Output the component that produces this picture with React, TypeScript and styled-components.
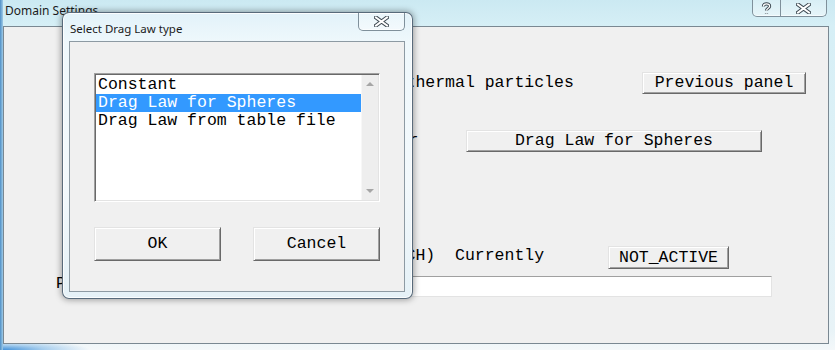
import React from "react";
import styled, { createGlobalStyle } from "styled-components";

const mono = `"Liberation Mono", "Courier New", monospace`;
const ui = `"Noto Sans", "Open Sans", sans-serif`;

const GlobalStyle = createGlobalStyle`
  html, body {
    margin: 0;
    padding: 0;
    width: 835px;
    height: 350px;
    overflow: hidden;
  }
  body {
    font-family: ${mono};
  }
`;

const Frame = styled.div`
  position: relative;
  width: 835px;
  height: 350px;
  box-sizing: border-box;
  display: flex;
  flex-direction: column;
  padding: 0 6px 6px 3px;
  background:
    linear-gradient(90deg, #4f8fc6 0, #9fcbe8 3px, transparent 3px),
    radial-gradient(ellipse 90px 10px at 0 100%, #3f8fd8 0, rgba(120, 180, 230, 0.6) 50%, transparent 100%),
    linear-gradient(180deg, #cbe9f2 0, #d6eff6 26px, #e8f3f7 330px, #f4f8fa 100%);
`;

const TitleBar = styled.div`
  height: 26px;
  display: flex;
  justify-content: space-between;
  align-items: flex-start;
`;

const WindowTitle = styled.div`
  padding: 3px 0 0 2px;
  font: 12px/16px ${ui};
  color: #1b1b1b;
`;

const Caption = styled.div`
  display: flex;
  margin-right: 2px;
`;

const CaptionButton = styled.div<{ $w: number; $h?: number; $round: string; $noLeft?: boolean }>`
  width: ${(p) => p.$w}px;
  height: ${(p) => p.$h ?? 17}px;
  box-sizing: border-box;
  display: flex;
  align-items: center;
  justify-content: center;
  border: 1px solid #7f909b;
  border-top: none;
  border-left-width: ${(p) => (p.$noLeft ? 0 : 1)}px;
  border-radius: ${(p) => p.$round};
  background: linear-gradient(180deg, rgba(255, 255, 255, 0.25), rgba(255, 255, 255, 0.45));
  box-shadow: inset 0 -1px 0 rgba(255, 255, 255, 0.6);
`;

const Client = styled.div`
  flex: 1;
  border: 1px solid #7a8892;
  background: #f0f0f0;
  display: flex;
  flex-direction: column;
`;

const Row = styled.div<{ $top: number }>`
  display: flex;
  align-items: flex-start;
  margin-top: ${(p) => p.$top}px;
`;

const Label = styled.div<{ $x: number; $w: number; $dy?: number }>`
  width: ${(p) => p.$w}px;
  flex: none;
  margin-left: ${(p) => p.$x}px;
  margin-top: ${(p) => p.$dy ?? 0}px;
  font: 16.5px/20px ${mono};
  color: #000;
  white-space: pre;
  overflow: hidden;
`;

const WinButton = styled.button<{ $w: number; $h: number }>`
  width: ${(p) => p.$w}px;
  height: ${(p) => p.$h}px;
  flex: none;
  box-sizing: border-box;
  margin: 0;
  padding: 0;
  font: 16.5px/${(p) => p.$h - 2}px ${mono};
  color: #000;
  text-align: center;
  white-space: pre;
  background: #f0f0f0;
  border: 1px solid;
  border-color: #e3e3e3 #696969 #696969 #e3e3e3;
  box-shadow: inset 1px 1px #fff, inset -1px -1px #a0a0a0;
`;

const TextField = styled.div<{ $w: number }>`
  width: ${(p) => p.$w}px;
  height: 21px;
  box-sizing: border-box;
  background: #fff;
  border: 1px solid;
  border-color: #a0a0a0 #e3e3e3 #e3e3e3 #a0a0a0;
`;

/* modal dialog lies over the main panel */
const Dialog = styled.div`
  position: absolute;
  left: 62px;
  top: 12px;
  width: 351px;
  height: 287px;
  box-sizing: border-box;
  display: flex;
  flex-direction: column;
  padding: 0 7px 6px 6px;
  border: 1px solid rgba(40, 60, 80, 0.75);
  border-radius: 7px;
  background: linear-gradient(180deg, #e2f2f9 0, #eff8fc 30px, #f3f9fc 60%, #e5f1f7 100%);
  box-shadow: 0 0 6px 1px rgba(0, 0, 0, 0.35), inset 0 0 0 1px rgba(255, 255, 255, 0.85);
`;

const DialogTitleBar = styled.div`
  height: 28px;
  flex: none;
  display: flex;
  justify-content: space-between;
  align-items: flex-start;
`;

const DialogTitle = styled.div`
  padding: 8px 0 0 1px;
  font: 11.5px/15px ${ui};
  color: #1b1b1b;
`;

const DialogClient = styled.div`
  flex: 1;
  border: 1px solid #8d9aa3;
  background: #f0f0f0;
  display: flex;
  flex-direction: column;
  padding-left: 24px;
`;

const ListBox = styled.div`
  width: 286px;
  height: 129px;
  box-sizing: border-box;
  margin-top: 31px;
  display: flex;
  background: #fff;
  border: 1px solid;
  border-color: #a0a0a0 #fff #fff #a0a0a0;
  box-shadow: inset 1px 1px #696969, inset -1px -1px #e3e3e3;
  padding: 1px;
`;

const Items = styled.div`
  flex: 1;
  display: flex;
  flex-direction: column;
  padding-top: 1px;
`;

const Item = styled.div<{ $selected?: boolean }>`
  height: 18px;
  padding-left: 2px;
  font: 16.5px/18px ${mono};
  white-space: pre;
  color: ${(p) => (p.$selected ? "#fff" : "#000")};
  background: ${(p) => (p.$selected ? "#3399ff" : "transparent")};
`;

const ScrollBar = styled.div`
  width: 16px;
  flex: none;
  background: #eeeeee;
  border-left: 1px solid #f7f7f7;
  display: flex;
  flex-direction: column;
  justify-content: space-between;
  align-items: center;
  padding: 7px 0 7px;
`;

const Arrow = styled.div<{ $down?: boolean }>`
  width: 0;
  height: 0;
  border-left: 4px solid transparent;
  border-right: 4px solid transparent;
  ${(p) => (p.$down ? "border-top: 4px solid #a6a6a6;" : "border-bottom: 4px solid #a6a6a6;")}
`;

const DialogButtons = styled.div`
  display: flex;
  gap: 32px;
  margin-top: 25px;
`;

const CloseGlyph = () => (
  <svg width="15" height="11" viewBox="0 0 15 11">
    <path d="M2 1.5 L13 9.5 M2 9.5 L13 1.5" stroke="#3b4750" strokeWidth="4" strokeLinecap="square" />
    <path d="M2 1.5 L13 9.5 M2 9.5 L13 1.5" stroke="#fff" strokeWidth="2" strokeLinecap="square" />
  </svg>
);

const helpPath = "M2.4 4.4 C2.4 1 8.6 1 8.6 4.2 C8.6 6.2 5.5 6.4 5.5 8.6 M5.5 10.9 L5.5 11.4";

const HelpGlyph = () => (
  <svg width="11" height="13" viewBox="0 0 11 13">
    <path d={helpPath} fill="none" stroke="#3b4750" strokeWidth="3.2" />
    <path d={helpPath} fill="none" stroke="#fff" strokeWidth="1.3" />
  </svg>
);

export default function App() {
  return (
    <>
      <GlobalStyle />
      <Frame>
        <TitleBar>
          <WindowTitle>Domain Settings</WindowTitle>
          <Caption>
            <CaptionButton $w={29} $round="0 0 0 5px">
              <HelpGlyph />
            </CaptionButton>
            <CaptionButton $w={46} $round="0 0 5px 0" $noLeft>
              <CloseGlyph />
            </CaptionButton>
          </Caption>
        </TitleBar>
        <Client>
          <Row $top={45}>
            <Label $x={401.5} $w={236.5} $dy={1}>thermal particles</Label>
            <WinButton $w={164} $h={22}>Previous panel</WinButton>
          </Row>
          <Row $top={36}>
            <Label $x={404.5} $w={57.5} $dy={1}>r</Label>
            <WinButton $w={296} $h={22}>Drag Law for Spheres</WinButton>
          </Row>
          <Row $top={94}>
            <Label $x={401.5} $w={202.5} $dy={0}>{"CH)  Currently"}</Label>
            <WinButton $w={121} $h={23}>NOT_ACTIVE</WinButton>
          </Row>
          <Row $top={7}>
            <Label $x={52} $w={250} $dy={-2}>P</Label>
            <TextField $w={466} />
          </Row>
        </Client>

        <Dialog>
          <DialogTitleBar>
            <DialogTitle>Select Drag Law type</DialogTitle>
            <CaptionButton $w={47} $h={18} $round="0 0 5px 5px">
              <CloseGlyph />
            </CaptionButton>
          </DialogTitleBar>
          <DialogClient>
            <ListBox>
              <Items>
                <Item>Constant</Item>
                <Item $selected>Drag Law for Spheres</Item>
                <Item>Drag Law from table file</Item>
              </Items>
              <ScrollBar>
                <Arrow />
                <Arrow $down />
              </ScrollBar>
            </ListBox>
            <DialogButtons>
              <WinButton $w={127} $h={34}>OK</WinButton>
              <WinButton $w={127} $h={34}>Cancel</WinButton>
            </DialogButtons>
          </DialogClient>
        </Dialog>
      </Frame>
    </>
  );
}
